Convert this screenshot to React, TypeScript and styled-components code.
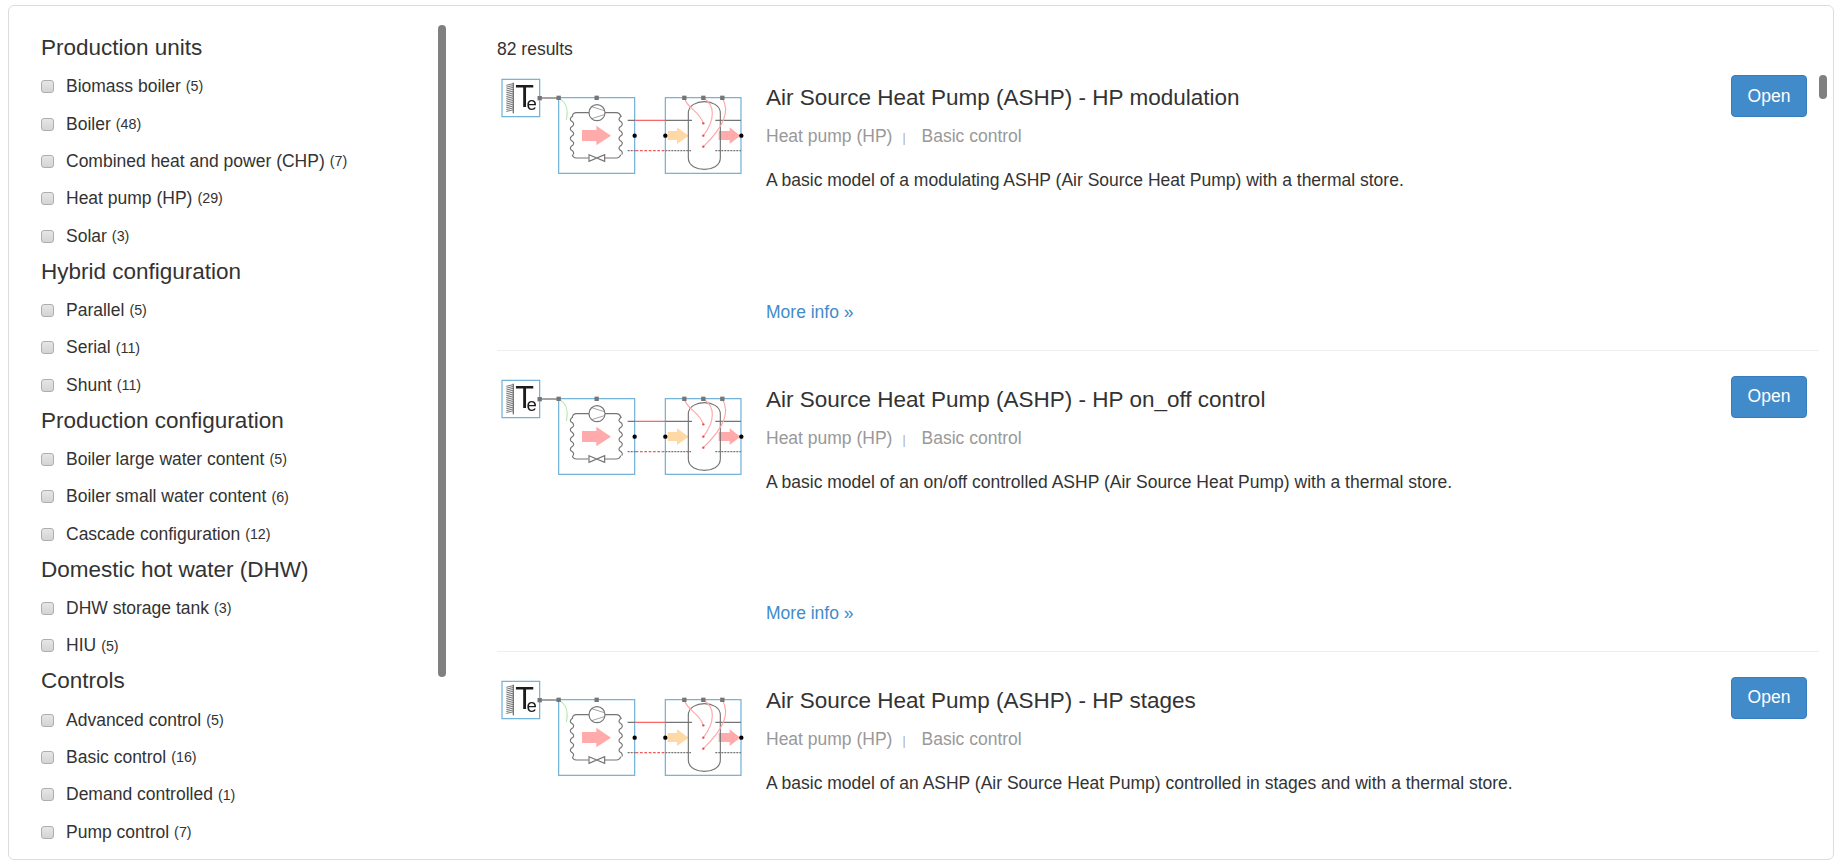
import React from 'react';
import styled, { createGlobalStyle } from 'styled-components';

const GlobalStyle = createGlobalStyle`
  html, body {
    margin: 0;
    height: 100%;
    overflow: hidden;
    background: #fff;
  }
  body {
    font-family: "Liberation Sans", Arial, sans-serif;
    font-size: 17.5px;
    line-height: 1.43;
    color: #333;
  }
`;

const Panel = styled.div`
  position: relative;
  display: flex;
  box-sizing: border-box;
  height: 855px;
  margin: 5px 8px 0;
  border: 1px solid #ddd;
  border-radius: 6px;
  overflow: hidden;
`;

const Sidebar = styled.aside`
  flex: 0 0 488px;
  box-sizing: border-box;
  height: 838px;
  padding: 25px 0 0 32px;
  overflow: hidden;
`;

const GroupTitle = styled.h4`
  height: 37px;
  margin: 0;
  font-size: 22.5px;
  font-weight: 400;
  line-height: 37px;
  color: #333;
  transform: translateY(-2px);
`;

const FilterRow = styled.label`
  display: flex;
  align-items: center;
  height: 37.35px;
  color: #333;
`;

const FilterBox = styled.input`
  appearance: none;
  flex: none;
  width: 13px;
  height: 13px;
  margin: 0 12px 0 0;
  background: linear-gradient(#e6e6e6, #d4d4d4);
  border: 1px solid #aeaeae;
  border-radius: 3px;
`;

const Count = styled.span`
  margin-left: 5px;
  font-size: 14.3px;
`;

const Bar = styled.div`
  position: absolute;
  width: 8px;
  background: #808080;
  border-radius: 4px;
`;

const SideBar = styled(Bar)`
  top: 19px;
  left: 429px;
  height: 652px;
`;

const MainBar = styled(Bar)`
  top: 69px;
  right: 6px;
  height: 24px;
`;

const Main = styled.main`
  flex: 1;
  min-width: 0;
  padding: 32px 14px 0 0;
`;

const ResultCount = styled.div`
  height: 37px;
  line-height: 22px;
`;

const Thumb = styled.svg`
  flex: none;
  width: 250px;
  height: 103.33px;
  margin: 0 19px 0 0;
`;

const ItemBody = styled.div`
  display: flex;
  flex: 1;
  flex-direction: column;
  min-width: 0;
  padding-top: 6px;
`;

const Item = styled.article`
  display: flex;
  box-sizing: border-box;
  height: 276px;
  border-bottom: 1px solid #eee;
  & + & {
    height: 301px;
    padding-top: 24.8px;
  }
  & + & ${ItemBody} {
    padding-top: 7px;
  }
`;

const ItemTitle = styled.h3`
  margin: 0;
  font-size: 22.5px;
  font-weight: 400;
  line-height: 34px;
  color: #333;
`;

const Tags = styled.div`
  display: flex;
  align-items: baseline;
  margin-top: 10px;
  line-height: 22px;
  color: #999;
`;

const Separator = styled.span`
  margin: 0 16px 0 10px;
  font-size: 12px;
  color: #aaa;
`;

const Description = styled.p`
  margin: 20px 0 0;
  line-height: 22px;
`;

const MoreInfo = styled.a`
  margin-top: auto;
  margin-bottom: 27px;
  line-height: 22px;
  color: #428bca;
  text-decoration: none;
`;

const OpenButton = styled.button`
  flex: none;
  align-self: flex-start;
  width: 76px;
  height: 42px;
  margin: 0 12px 0 0;
  padding: 0;
  font-family: inherit;
  font-size: 17.5px;
  color: #fff;
  background: #428bca;
  border: 1px solid #357ebd;
  border-radius: 4px;
`;

const LINE = '#757575';
const BLUE = '#6aaed6';
const PINK = '#ffabab';
const CURVE = '#ffa8a8';

// zig-zag heat exchanger coil, drawn top to bottom
const coil = (x: number, top: number, bottom: number) => {
  const turns = 8;
  const step = (bottom - top) / turns;
  let d = `M${x + 3} ${top}`;
  for (let i = 0; i < turns; i++) {
    const dir = i % 2 === 0 ? -9 : 9;
    d += ` Q${x + dir} ${top + step * (i + 0.5)} ${x + 3 * (i % 2 === 0 ? -1 : 1)} ${top + step * (i + 1)}`;
  }
  return d;
};

const Diagram: React.FC = () => (
  <Thumb viewBox="20 15 750 310">
    <defs>
      <filter id="soft" x="-5%" y="-5%" width="110%" height="110%">
        <feGaussianBlur stdDeviation="0.7" />
      </filter>
    </defs>
    <g fill="none" strokeWidth="3.5" filter="url(#soft)">
      <rect x="35" y="28" width="113" height="112" stroke={BLUE} />
      <path d="M69 38V130" stroke={LINE} strokeWidth="4" />
      {Array.from({ length: 15 }, (_, i) => (
        <path key={i} d={`M48 ${46 + i * 5.6}L68 ${41 + i * 5.6}`} stroke={LINE} strokeWidth="3" />
      ))}
      <text x="75" y="112" fontFamily="Liberation Sans, sans-serif" fontSize="92" fill="#1a1a1a" stroke="none">
        T
        <tspan dx="-23" dy="8" fontSize="56">e</tspan>
      </text>

      <rect x="205" y="83" width="228" height="227" stroke={BLUE} />
      <rect x="525" y="83" width="227" height="227" stroke={BLUE} />
      <path d="M148 84H205" stroke={LINE} strokeWidth="4" />
      <path d="M205 84C225 95 236 112 228 150" stroke="#aeeaae" />

      <path d="M296 128H258Q248 128 246 138M344 128H378Q388 128 391 138" stroke={LINE} />
      <path d={coil(245, 138, 254)} stroke={LINE} />
      <path d={coil(391, 138, 254)} stroke={LINE} />
      <path d="M246 254Q248 264 258 264H295M343 264H378Q388 264 391 254" stroke={LINE} />
      <path d="M296 254L343 274V254L296 274Z" stroke={LINE} />
      <circle cx="320" cy="128" r="24" stroke={LINE} />
      <path d="M304 110L342 122M304 146L342 134" stroke={LINE} strokeWidth="2" />
      <path d="M275 180H318V167L362 197L318 226V213H275Z" fill={PINK} stroke="none" />

      <path d="M412 151H436M525 151H605M675 151H752" stroke={LINE} />
      <path d="M436 151H525" stroke="#f25a5a" />
      <path d="M412 242H436M525 242H602M675 242H752" stroke={LINE} strokeDasharray="6 3" />
      <path d="M436 242H525" stroke="#f25a5a" strokeDasharray="8 5" />

      <path d="M532 183H560V172L595 197L560 222V210H532Z" fill="#fed9a5" stroke="none" />
      <path d="M685 183H718V172L750 197L718 222V210H685Z" fill={PINK} stroke="none" />
      <path d="M594 130C594 105 620 95 642 95C664 95 690 105 690 130V264C690 288 664 298 642 298C620 298 594 288 594 264Z" stroke={LINE} />

      <path d="M582 84C592 118 625 120 639 160" stroke={CURVE} />
      <path d="M639 84C675 105 675 150 639 197" stroke={CURVE} />
      <path d="M696 84C720 125 700 170 639 230" stroke={CURVE} />
    </g>
    <g filter="url(#soft)">
      {[148, 205, 319, 582, 639, 696].map((x) => (
        <rect key={x} x={x - 6.5} y={x < 200 ? 78 : 77} width="13" height="13" fill={LINE} />
      ))}
      {[433, 525, 753].map((x) => (
        <circle key={x} cx={x} cy="197" r="6.5" fill="#000" />
      ))}
      {[160, 197, 230].map((y) => (
        <circle key={y} cx="639" cy={y} r="3.5" fill="#f04a4a" />
      ))}
    </g>
  </Thumb>
);

const filters: { title: string; rows: [string, number][] }[] = [
  {
    title: 'Production units',
    rows: [['Biomass boiler', 5], ['Boiler', 48], ['Combined heat and power (CHP)', 7], ['Heat pump (HP)', 29], ['Solar', 3]],
  },
  {
    title: 'Hybrid configuration',
    rows: [['Parallel', 5], ['Serial', 11], ['Shunt', 11]],
  },
  {
    title: 'Production configuration',
    rows: [['Boiler large water content', 5], ['Boiler small water content', 6], ['Cascade configuration', 12]],
  },
  {
    title: 'Domestic hot water (DHW)',
    rows: [['DHW storage tank', 3], ['HIU', 5]],
  },
  {
    title: 'Controls',
    rows: [['Advanced control', 5], ['Basic control', 16], ['Demand controlled', 1], ['Pump control', 7]],
  },
];

const results = [
  {
    title: 'Air Source Heat Pump (ASHP) - HP modulation',
    text: 'A basic model of a modulating ASHP (Air Source Heat Pump) with a thermal store.',
    more: true,
  },
  {
    title: 'Air Source Heat Pump (ASHP) - HP on_off control',
    text: 'A basic model of an on/off controlled ASHP (Air Source Heat Pump) with a thermal store.',
    more: true,
  },
  {
    title: 'Air Source Heat Pump (ASHP) - HP stages',
    text: 'A basic model of an ASHP (Air Source Heat Pump) controlled in stages and with a thermal store.',
    more: false,
  },
];

const App: React.FC = () => (
  <>
    <GlobalStyle />
    <Panel>
      <Sidebar>
        {filters.map((group) => (
          <section key={group.title}>
            <GroupTitle>{group.title}</GroupTitle>
            {group.rows.map(([name, count]) => (
              <FilterRow key={name}>
                <FilterBox type="checkbox" />
                {name}
                <Count>({count})</Count>
              </FilterRow>
            ))}
          </section>
        ))}
        <SideBar />
      </Sidebar>
      <Main>
        <ResultCount>82 results</ResultCount>
        {results.map((item) => (
          <Item key={item.title}>
            <Diagram />
            <ItemBody>
              <ItemTitle>{item.title}</ItemTitle>
              <Tags>
                Heat pump (HP)
                <Separator>|</Separator>
                Basic control
              </Tags>
              <Description>{item.text}</Description>
              {item.more && <MoreInfo href="#">More info »</MoreInfo>}
            </ItemBody>
            <OpenButton>Open</OpenButton>
          </Item>
        ))}
      </Main>
      <MainBar />
    </Panel>
  </>
);

export default App;
